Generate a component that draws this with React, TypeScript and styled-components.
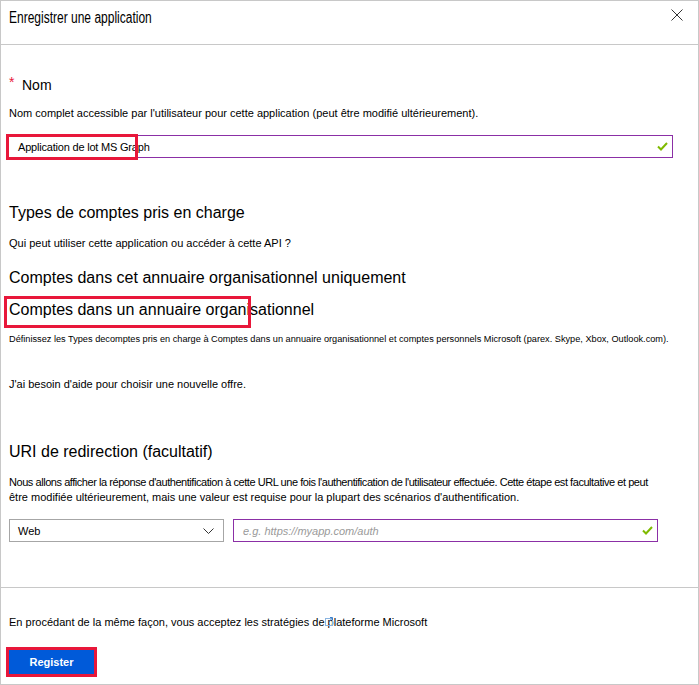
import React from "react";
import styled, { createGlobalStyle } from "styled-components";

const GlobalStyle = createGlobalStyle`
  html, body { margin: 0; padding: 0; background: #ffffff; }
  body { font-family: "Liberation Sans", Arial, sans-serif; color: #000; }
  * { box-sizing: border-box; }
`;

const RED = "#e8173a";
const PURPLE = "#8b2fa6";

const Panel = styled.div`
  width: 699px;
  height: 685px;
  border: 1px solid #c8c8c8;
  display: flex;
  flex-direction: column;
  background: #fff;
`;

const Header = styled.header`
  height: 44px;
  flex: none;
  border-bottom: 1px solid #c8c8c8;
  display: flex;
  justify-content: space-between;
  align-items: flex-start;
  padding: 7px 8px 0 8px;
`;

const Title = styled.h1`
  margin: 0;
  font-family: "Liberation Sans", Arial, sans-serif;
  font-weight: 400;
  font-size: 16px;
  line-height: 20px;
  color: #000;
  transform: scaleX(0.75);
  transform-origin: left center;
  white-space: nowrap;
`;

const CloseButton = styled.button`
  border: none;
  background: none;
  padding: 0;
  margin: 1px 7px 0 0;
  width: 12px;
  height: 12px;
  display: flex;
  cursor: pointer;
`;

const Body = styled.main`
  flex: 1;
  display: flex;
  flex-direction: column;
  padding: 0 8px;
`;

const Footer = styled.footer`
  flex: none;
  height: 97px;
  border-top: 1px solid #c8c8c8;
  display: flex;
  flex-direction: column;
  align-items: flex-start;
  padding: 27px 8px 0 8px;
`;

const Heading = styled.div<{ $mt: number; $size?: number }>`
  margin-top: ${(p) => p.$mt}px;
  font-size: ${(p) => p.$size ?? 16}px;
  line-height: 20px;
  position: relative;
  white-space: nowrap;
`;

const Label = styled.div<{ $mt: number }>`
  margin-top: ${(p) => p.$mt}px;
  font-size: 14px;
  line-height: 18px;
  display: flex;
  align-items: flex-start;
`;

const Star = styled.span`
  color: ${RED};
  font-size: 14px;
  line-height: 14px;
  width: 13px;
  margin-top: -1px;
`;

const Text = styled.p<{ $mt: number; $size?: number; $lh?: number }>`
  margin: ${(p) => p.$mt}px 0 0 0;
  font-size: ${(p) => p.$size ?? 11}px;
  line-height: ${(p) => p.$lh ?? 14}px;
  white-space: nowrap;
  color: #000;
`;

const Tight = styled.span`
  letter-spacing: -0.45px;
`;

const InputBox = styled.div<{ $mt?: number; $width: number; $ml?: number }>`
  position: relative;
  margin-top: ${(p) => p.$mt ?? 0}px;
  margin-left: ${(p) => p.$ml ?? 0}px;
  width: ${(p) => p.$width}px;
  height: 23px;
  border: 1px solid ${PURPLE};
  display: flex;
  align-items: center;
  justify-content: space-between;
  padding: 0 4px 0 9px;
  font-size: 11px;
  line-height: 14px;
`;

const Value = styled.span`
  letter-spacing: -0.2px;
`;

const Placeholder = styled.span`
  color: #9a9a9a;
  font-style: italic;
`;

const Mark = styled.span<{ $l: number; $t: number; $w: number; $h: number }>`
  position: absolute;
  left: ${(p) => p.$l}px;
  top: ${(p) => p.$t}px;
  width: ${(p) => p.$w}px;
  height: ${(p) => p.$h}px;
  border: 3px solid ${RED};
  pointer-events: none;
`;

const Row = styled.div<{ $mt: number }>`
  margin-top: ${(p) => p.$mt}px;
  display: flex;
  gap: 9px;
`;

const Select = styled.div`
  width: 215px;
  height: 23px;
  border: 1px solid #a6a6a6;
  display: flex;
  align-items: center;
  justify-content: space-between;
  padding: 0 9px 0 8px;
  font-size: 11px;
  line-height: 14px;
`;

const LinkIcon = styled.svg`
  display: inline-block;
  width: 8px;
  height: 9px;
  margin: 0 -8px 0 0;
  vertical-align: 0px;
  position: relative;
`;

const PrimaryButton = styled.button`
  margin-top: 21px;
  width: 85px;
  height: 24px;
  border: none;
  background: #005ad9;
  color: #fff;
  font-family: "Liberation Sans", Arial, sans-serif;
  font-weight: 700;
  font-size: 11px;
  line-height: 14px;
  outline: 3px solid ${RED};
  padding: 0;
  cursor: pointer;
`;

const Check = () => (
  <svg width="11" height="9" viewBox="0 0 11 9">
    <path d="M1 4.5 L4 7.5 L10 1" fill="none" stroke="#7fba00" strokeWidth="2" />
  </svg>
);

export default function App() {
  return (
    <>
      <GlobalStyle />
      <Panel>
        <Header>
          <Title>Enregistrer une application</Title>
          <CloseButton aria-label="Fermer">
            <svg width="12" height="12" viewBox="0 0 12 12">
              <path d="M0.5 0.5 L11.5 11.5 M11.5 0.5 L0.5 11.5" stroke="#333" strokeWidth="1" />
            </svg>
          </CloseButton>
        </Header>
        <Body>
          <Label $mt={31}>
            <Star>*</Star>
            <span>Nom</span>
          </Label>
          <Text $mt={12}>
            Nom complet accessible par l'utilisateur pour cette application (peut être modifié ultérieurement).
          </Text>
          <InputBox $mt={15} $width={665} $ml={-1}>
            <Value>Application de lot MS Graph</Value>
            <Check />
            <Mark $l={-3} $t={-2} $w={132} $h={26} />
          </InputBox>

          <Heading $mt={45}>Types de comptes pris en charge</Heading>
          <Text $mt={13}>Qui peut utiliser cette application ou accéder à cette API ?</Text>
          <Heading $mt={18}>Comptes dans cet annuaire organisationnel uniquement</Heading>
          <Heading $mt={12}>
            Comptes dans un annuaire organisationnel
            <Mark $l={-5} $t={-4} $w={247} $h={32} />
          </Heading>
          <Text $mt={13} $size={9.2} $lh={12}>
            Définissez les Types decomptes pris en charge à Comptes dans un annuaire organisationnel et comptes personnels Microsoft (parex. Skype, Xbox, Outlook.com).
          </Text>
          <Text $mt={32}>J'ai besoin d'aide pour choisir une nouvelle offre.</Text>

          <Heading $mt={51}>URI de redirection (facultatif)</Heading>
          <Text $mt={13} $lh={15}>
            <Tight>
              Nous allons afficher la réponse d'authentification à cette URL une fois l'authentification de l'utilisateur effectuée. Cette étape est facultative et peut
            </Tight>
            <br />
            être modifiée ultérieurement, mais une valeur est requise pour la plupart des scénarios d'authentification.
          </Text>
          <Row $mt={14}>
            <Select>
              <span>Web</span>
              <svg width="11" height="6" viewBox="0 0 11 6">
                <path d="M0.5 0.5 L5.5 5.5 L10.5 0.5" fill="none" stroke="#333" strokeWidth="1" />
              </svg>
            </Select>
            <InputBox $width={425}>
              <Placeholder>e.g. https://myapp.com/auth</Placeholder>
              <Check />
            </InputBox>
          </Row>
        </Body>
        <Footer>
          <Text $mt={0}>
            En procédant de la même façon, vous acceptez les stratégies de
            <LinkIcon viewBox="0 0 8 9">
              <rect x="0.5" y="1.5" width="7" height="7" fill="none" stroke="#8ab4e0" strokeWidth="1" />
              <path d="M3.5 5 L7.5 1 M5 0.5 H7.5 V3" fill="none" stroke="#3c7fc8" strokeWidth="1" />
            </LinkIcon>
            {" "}plateforme Microsoft
          </Text>
          <PrimaryButton>Register</PrimaryButton>
        </Footer>
      </Panel>
    </>
  );
}
